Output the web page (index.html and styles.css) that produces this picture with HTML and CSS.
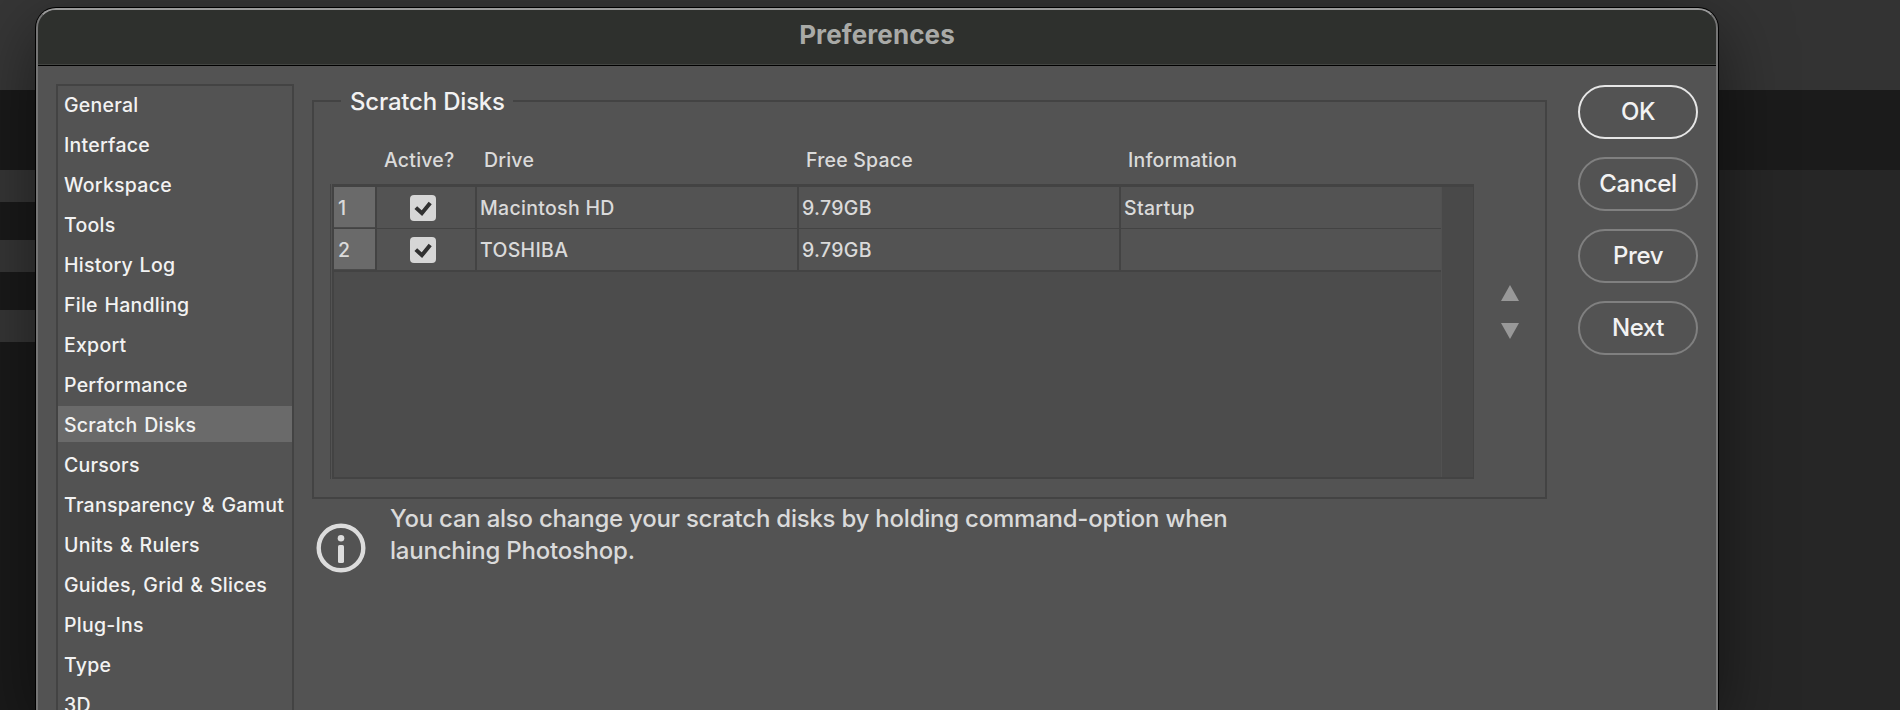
FILE: index.html
```html
<!DOCTYPE html>
<html lang="en">
<head>
    <meta charset="UTF-8">
    <meta name="viewport" content="width=device-width, initial-scale=1.0">
    <title>Preferences</title>
    <link rel="stylesheet" href="styles.css">
</head>
<body>
    <div class="backdrop">
        <div class="backdrop-left"></div>
        <div class="backdrop-right"></div>
    </div>

    <div class="window">
        <div class="titlebar">Preferences</div>

        <div class="window-body">
            <ul class="sidebar">
                <li>General</li>
                <li>Interface</li>
                <li>Workspace</li>
                <li>Tools</li>
                <li>History Log</li>
                <li>File Handling</li>
                <li>Export</li>
                <li>Performance</li>
                <li class="selected">Scratch Disks</li>
                <li>Cursors</li>
                <li>Transparency &amp; Gamut</li>
                <li>Units &amp; Rulers</li>
                <li>Guides, Grid &amp; Slices</li>
                <li>Plug-Ins</li>
                <li>Type</li>
                <li>3D</li>
            </ul>

            <div class="main">
                <div class="group">
                    <div class="group-legend">
                        <span class="legend-line legend-line-left"></span>
                        <h2 class="legend-text">Scratch Disks</h2>
                        <span class="legend-line legend-line-right"></span>
                    </div>
                    <div class="group-body">
                        <div class="disks">
                            <div class="disk-head">
                                <span></span>
                                <span class="head-active">Active?</span>
                                <span>Drive</span>
                                <span>Free Space</span>
                                <span>Information</span>
                            </div>
                            <div class="disk-frame">
                                <div class="disk-table">
                                    <div class="disk-rows">
                                        <div class="disk-row">
                                            <div class="cell cell-num">1</div>
                                            <div class="cell cell-check">
                                                <svg class="check" viewBox="0 0 26 26"><path d="M5.8 12.6 L11.9 18.2 L20.2 7.9"/></svg>
                                            </div>
                                            <div class="cell">Macintosh HD</div>
                                            <div class="cell">9.79GB</div>
                                            <div class="cell cell-last">Startup</div>
                                        </div>
                                        <div class="disk-row disk-row-end">
                                            <div class="cell cell-num">2</div>
                                            <div class="cell cell-check">
                                                <svg class="check" viewBox="0 0 26 26"><path d="M5.8 12.6 L11.9 18.2 L20.2 7.9"/></svg>
                                            </div>
                                            <div class="cell">TOSHIBA</div>
                                            <div class="cell">9.79GB</div>
                                            <div class="cell cell-last"></div>
                                        </div>
                                    </div>
                                    <div class="scrollbar"></div>
                                </div>
                            </div>
                        </div>
                        <div class="order">
                            <svg class="arrow" viewBox="0 0 18 16"><path d="M9 0 L18 16 H0 Z"/></svg>
                            <svg class="arrow" viewBox="0 0 18 16"><path d="M0 0 H18 L9 16 Z"/></svg>
                        </div>
                    </div>
                </div>

                <div class="note">
                    <svg class="info-icon" viewBox="0 0 50 50">
                        <circle class="info-ring" cx="25" cy="25" r="22.3"/>
                        <circle cx="25" cy="15.3" r="3.3"/>
                        <rect x="22" y="22" width="6" height="18" rx="1.6"/>
                    </svg>
                    <p class="note-text">You can also change your scratch disks by holding command-option when<br>launching Photoshop.</p>
                </div>
            </div>

            <div class="buttons">
                <button class="btn btn-default">OK</button>
                <button class="btn">Cancel</button>
                <button class="btn">Prev</button>
                <button class="btn">Next</button>
            </div>
        </div>
    </div>
</body>
</html>
```
FILE: styles.css
```css
* {
    margin: 0;
    padding: 0;
    box-sizing: border-box;
}

body {
    font-family: Inter, 'Liberation Sans', sans-serif;
    font-size: 19.5px;
    font-weight: 500;
    color: #dadada;
    background: #262626;
    height: 710px;
    overflow: hidden;
    padding: 8px 0 0 36px;
}

/* app behind the dialog */
.backdrop {
    position: absolute;
    inset: 0;
    display: flex;
    justify-content: space-between;
}

.backdrop-left {
    width: 900px;
    background: linear-gradient(#363636 0 90px, #1a1a1a 90px 170px, #363636 170px 202px, #1a1a1a 202px 240px, #363636 240px 272px, #1a1a1a 272px 310px, #363636 310px 342px, #1a1a1a 342px);
}

.backdrop-right {
    flex: 1;
    background: linear-gradient(#333 0 90px, #1b1b1b 90px 170px, #262626 170px);
}

/* runs past the bottom of the screen */
.window {
    position: relative;
    width: 1682px;
    height: 702px;
    border: 2px solid #757575;
    border-top-color: #999;
    border-bottom: none;
    border-radius: 20px 20px 0 0;
    background: #535353;
    box-shadow: 0 0 0 1px #000, 0 20px 70px rgba(0, 0, 0, 0.5);
    overflow: hidden;
}

.titlebar {
    height: 56px;
    padding-top: 8px;
    background: #2e302d;
    border-bottom: 1px solid #000;
    box-shadow: inset 0 -1px 0 #434542;
    text-align: center;
    font-size: 26px;
    line-height: 34px;
    font-weight: 700;
    letter-spacing: 0.1px;
    color: #a9aaa7;
}

.window-body {
    display: flex;
    align-items: flex-start;
    height: 644px;
    padding: 18px 18px 0;
}

.sidebar {
    width: 238px;
    height: 626px;
    border: 2px solid #434343;
    border-bottom: none;
    overflow: hidden;
    list-style: none;
    color: #f2f2f2;
}

.sidebar li {
    height: 36px;
    margin-bottom: 4px;
    padding-left: 6px;
    line-height: 39px;
    letter-spacing: 0.25px;
    word-spacing: 1.2px;
    white-space: nowrap;
}

.sidebar .selected {
    background: #6a6a6a;
}

.main {
    width: 1235px;
    margin-left: 18px;
}

.group-legend {
    display: flex;
    align-items: flex-start;
    height: 18px;
}

.legend-line {
    height: 2px;
    margin-top: 16px;
    background: #434343;
}

.legend-line-left {
    width: 29px;
}

.legend-line-right {
    flex: 1;
}

.legend-text {
    width: 172px;
    padding-left: 9px;
    font-size: 24px;
    line-height: 36px;
    font-weight: 500;
    letter-spacing: -0.2px;
    color: #f2f2f2;
    white-space: nowrap;
}

.group-body {
    display: flex;
    height: 397px;
    border: 2px solid #434343;
    border-top: none;
    padding-left: 16px;
}

.disks {
    width: 1144px;
}

.disk-head {
    display: grid;
    grid-template-columns: 47px 107px 322px 322px 1fr;
    height: 82px;
    line-height: 116px;
    letter-spacing: 0.2px;
}

.head-active {
    padding-left: 7px;
}

.disk-frame {
    height: 295px;
    border-left: 1px solid #434343;
    padding-left: 1px;
}

.disk-table {
    display: flex;
    height: 295px;
    border: 2px solid #434343;
    border-top-width: 3px;
    border-right-width: 1px;
    background: #4c4c4c;
}

.disk-rows {
    width: 1107px;
}

.disk-row {
    display: grid;
    grid-template-columns: 43px 100px 322px 322px 320px;
    height: 42px;
    border-bottom: 1px solid #434343;
    background: #535353;
}

.disk-row-end {
    height: 43px;
    border-bottom-width: 2px;
}

.cell {
    border-right: 2px solid #434343;
    padding-left: 3px;
    line-height: 42px;
    height: 41px;
    letter-spacing: 0.3px;
}

.cell-last {
    border-right: none;
}

.cell-num {
    padding-left: 4px;
    background: #6a6a6a;
    box-shadow: inset 0 -1px 0 #4a4a4a;
}

.cell-check {
    padding: 8px 0 0 33px;
    line-height: 0;
}

.check {
    width: 26px;
    height: 26px;
    border-radius: 4px;
    background: #d6d6d6;
}

.check path {
    fill: none;
    stroke: #303030;
    stroke-width: 4;
}

.scrollbar {
    flex: 1;
    border-left: 1px solid #515151;
    background: #494949;
}

.order {
    display: flex;
    flex-direction: column;
    gap: 22px;
    padding: 183px 0 0 27px;
}

.arrow {
    width: 18px;
    height: 16px;
    fill: #989898;
}

.note {
    display: flex;
    align-items: flex-start;
    padding-left: 4px;
}

.info-icon {
    width: 50px;
    height: 50px;
    margin-top: 24px;
    fill: #dcdcdc;
}

.info-ring {
    fill: none;
    stroke: #dcdcdc;
    stroke-width: 4.4;
}

.note-text {
    margin: 4px 0 0 24px;
    font-size: 24px;
    line-height: 32px;
    letter-spacing: -0.23px;
    white-space: nowrap;
}

.buttons {
    display: flex;
    flex-direction: column;
    gap: 18px;
    margin: 1px 0 0 31px;
}

.btn {
    width: 120px;
    height: 54px;
    padding-bottom: 1px;
    border: 2px solid #808080;
    border-radius: 27px;
    background: none;
    font-family: inherit;
    font-size: 24px;
    font-weight: 500;
    letter-spacing: -0.4px;
    color: #f2f2f2;
}

.btn-default {
    border-color: #e6e6e6;
}
```
